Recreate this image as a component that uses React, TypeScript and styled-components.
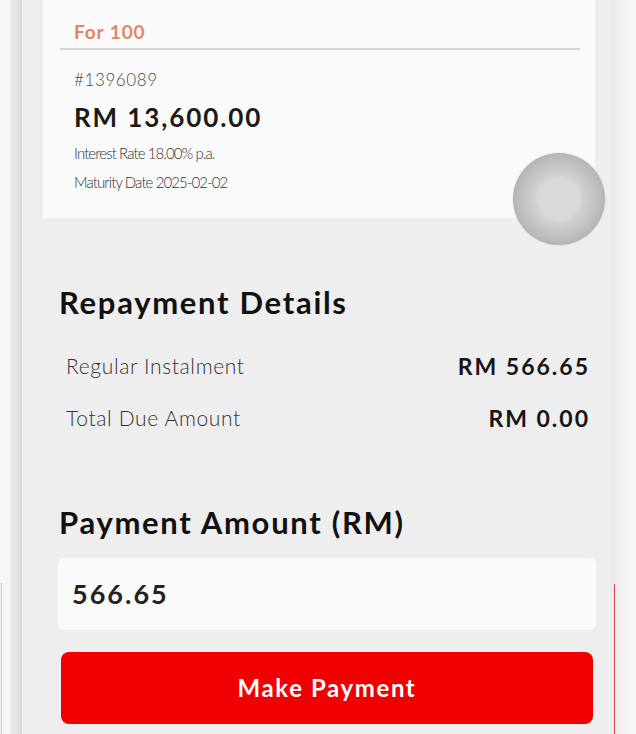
import React from "react";
import styled, { createGlobalStyle } from "styled-components";

const Global = createGlobalStyle`
  html, body { margin: 0; padding: 0; background: #f7f7f7; }
  body { font-family: "Lato", "Noto Sans", sans-serif; color: #111; }
`;

const Page = styled.div`
  position: relative;
  display: flex;
  width: 636px;
  height: 734px;
  overflow: hidden;
`;

const LeftRail = styled.div`
  position: relative;
  width: 10px;
  background: #f6f6f6;
  &::after {
    content: "";
    position: absolute;
    left: 1px;
    top: 583px;
    bottom: 0;
    width: 1px;
    background: #f5b8b8;
  }
`;

const FrameEdge = styled.div`
  width: 11px;
  background: linear-gradient(90deg, #ececec, #e2e2e2 60%, #dcdcdc);
  border-right: 1px solid #d7d7d7;
`;

const Panel = styled.main`
  width: 589px;
  background: #eeeeee;
  display: flex;
  flex-direction: column;
`;

const RightEdge = styled.div`
  position: relative;
  flex: 1;
  background: linear-gradient(90deg, #e9e9e9, #f1f1f1 40%, #f8f8f8);
  &::before {
    content: "";
    position: absolute;
    left: 3px;
    top: 584px;
    bottom: 0;
    width: 1px;
    background: #d84a4a;
  }
`;

const Card = styled.section`
  margin-left: 21px;
  width: 552px;
  background: #fafafa;
  padding: 18px 15px 21px 17px;
  box-sizing: border-box;
  display: flex;
  flex-direction: column;
`;

const CardTitle = styled.div`
  padding-left: 14px;
  line-height: 28px;
  font-size: 19px;
  font-weight: 700;
  letter-spacing: 0.9px;
  color: #e4855f;
`;

const Divider = styled.div`
  height: 2px;
  margin-top: 2px;
  background: #d6d6d6;
`;

const LoanId = styled.div`
  margin-top: 18px;
  padding-left: 14px;
  line-height: 24px;
  font-size: 17px;
  font-weight: 300;
  color: #4a4a4a;
  letter-spacing: 0.6px;
`;

const Amount = styled.div`
  margin-top: 8px;
  padding-left: 14px;
  line-height: 34px;
  font-size: 26px;
  font-weight: 700;
  letter-spacing: 1.9px;
  color: #1a1a1a;
`;

const Meta = styled.div<{ $gap?: number }>`
  margin-top: ${(p) => p.$gap ?? 0}px;
  padding-left: 14px;
  line-height: 29px;
  font-size: 15px;
  font-weight: 300;
  color: #333;
  letter-spacing: -0.9px;
`;

const Heading = styled.h2<{ $top: number }>`
  margin: ${(p) => p.$top}px 0 0 37px;
  line-height: 40px;
  font-size: 31px;
  font-weight: 700;
  letter-spacing: 1.7px;
  color: #111;
`;

const Rows = styled.div`
  margin: 18px 0 0 44px;
  width: 522px;
  display: flex;
  flex-direction: column;
`;

const Row = styled.div`
  display: flex;
  justify-content: space-between;
  align-items: center;
  height: 52px;
`;

const RowLabel = styled.span`
  font-size: 21px;
  font-weight: 300;
  color: #333;
  letter-spacing: 0.65px;
`;

const RowValue = styled.span`
  font-size: 23px;
  font-weight: 700;
  letter-spacing: 2px;
  margin-right: -2px;
  color: #151515;
`;

const AmountInput = styled.div`
  margin: 16px 0 0 36px;
  width: 538px;
  height: 72px;
  box-sizing: border-box;
  background: #fafafa;
  border-radius: 6px;
  display: flex;
  align-items: center;
  padding-left: 14px;
  font-size: 27px;
  font-weight: 700;
  letter-spacing: 2px;
  color: #222;
`;

const PayButton = styled.button`
  margin: 22px 0 0 39px;
  width: 532px;
  height: 72px;
  border: none;
  border-radius: 8px;
  background: #f00000;
  color: #fff;
  font-family: inherit;
  font-size: 24px;
  font-weight: 700;
  letter-spacing: 1.6px;
  display: flex;
  align-items: center;
  justify-content: center;
  padding: 0;
`;

const TouchBall = styled.div`
  position: absolute;
  left: 513px;
  top: 153px;
  width: 92px;
  height: 92px;
  border-radius: 50%;
  background: radial-gradient(circle at 50% 50%, #d9d9d9 0 20px, #cfcfcf 25px, #bdbdbd 40px, #b4b4b4 46px);
  box-shadow: 0 0 2px rgba(0,0,0,0.15);
`;

export default function App() {
  return (
    <Page>
      <Global />
      <LeftRail />
      <FrameEdge />
      <Panel>
        <Card>
          <CardTitle>For 100</CardTitle>
          <Divider />
          <LoanId>#1396089</LoanId>
          <Amount>RM 13,600.00</Amount>
          <Meta $gap={4.5}>Interest Rate 18.00% p.a.</Meta>
          <Meta>Maturity Date 2025-02-02</Meta>
        </Card>
        <Heading $top={64}>Repayment Details</Heading>
        <Rows>
          <Row>
            <RowLabel>Regular Instalment</RowLabel>
            <RowValue>RM 566.65</RowValue>
          </Row>
          <Row>
            <RowLabel>Total Due Amount</RowLabel>
            <RowValue>RM 0.00</RowValue>
          </Row>
        </Rows>
        <Heading $top={58}>Payment Amount (RM)</Heading>
        <AmountInput>566.65</AmountInput>
        <PayButton>Make Payment</PayButton>
      </Panel>
      <RightEdge />
      <TouchBall />
    </Page>
  );
}
